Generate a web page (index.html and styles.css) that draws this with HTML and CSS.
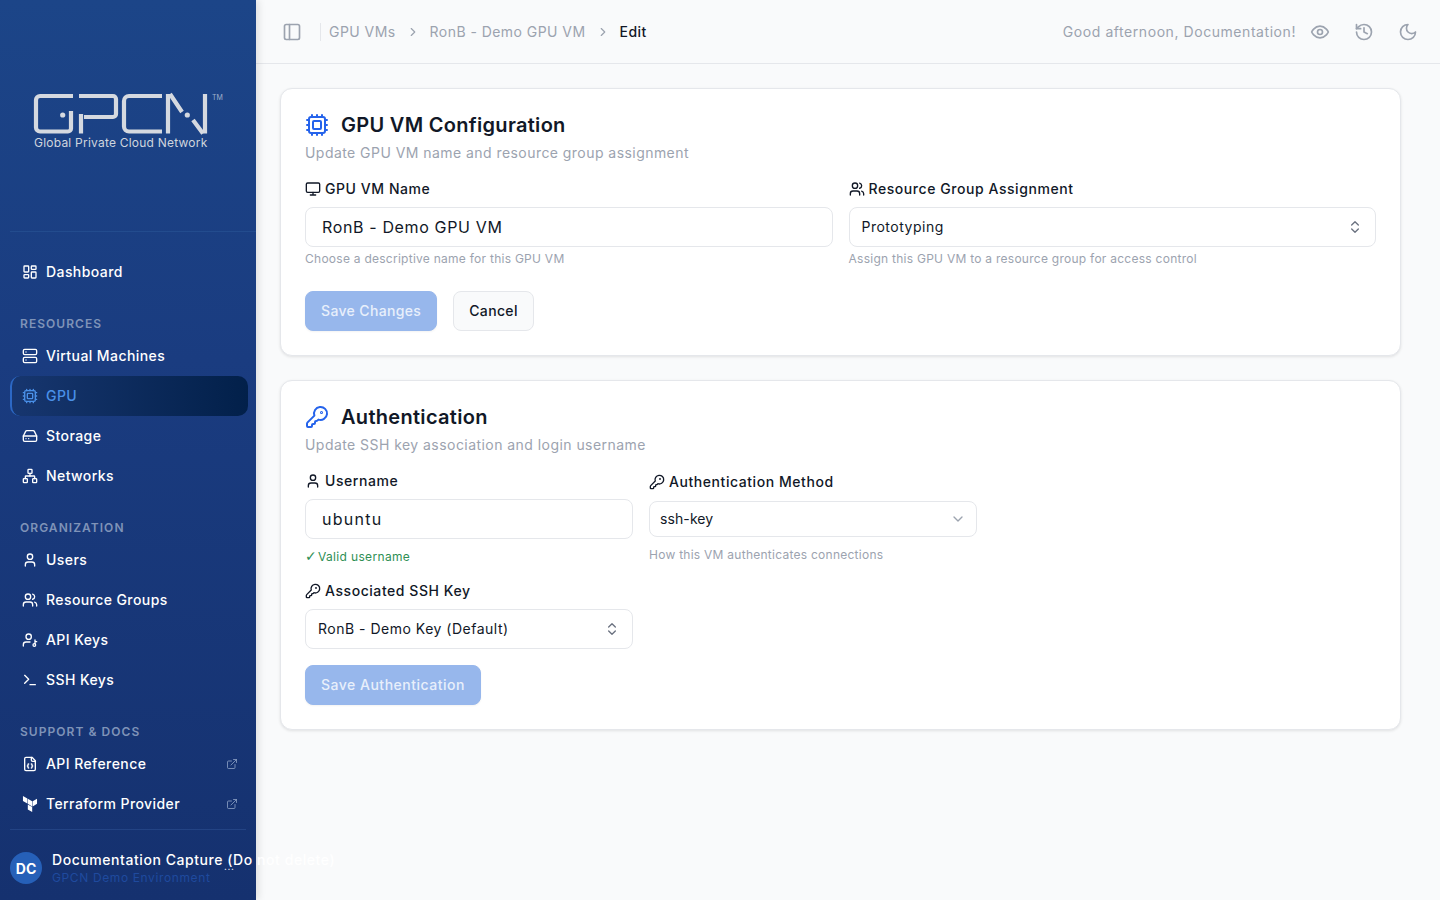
FILE: index.html
```html
<!DOCTYPE html>
<html lang="en">
<head>
    <meta charset="UTF-8">
    <meta name="viewport" content="width=device-width, initial-scale=1.0">
    <title>Edit GPU VM</title>
    <link rel="stylesheet" href="styles.css">
</head>
<body>
    <!-- icon sprite -->
    <svg class="sprite" xmlns="http://www.w3.org/2000/svg">
        <symbol id="i-dashboard" viewBox="0 0 24 24"><rect x="3" y="3" width="7" height="9" rx="1"/><rect x="14" y="3" width="7" height="5" rx="1"/><rect x="14" y="12" width="7" height="9" rx="1"/><rect x="3" y="16" width="7" height="5" rx="1"/></symbol>
        <symbol id="i-server" viewBox="0 0 24 24"><rect x="2" y="2" width="20" height="8" rx="2"/><rect x="2" y="14" width="20" height="8" rx="2"/><path d="M6 6h.01M6 18h.01"/></symbol>
        <symbol id="i-cpu" viewBox="0 0 24 24"><rect x="4" y="4" width="16" height="16" rx="2"/><rect x="8" y="8" width="8" height="8" rx="1"/><path d="M12 20v2M12 2v2M17 20v2M17 2v2M2 12h2M2 17h2M2 7h2M20 12h2M20 17h2M20 7h2M7 20v2M7 2v2"/></symbol>
        <symbol id="i-drive" viewBox="0 0 24 24"><path d="M22 12H2"/><path d="M5.45 5.11 2 12v6a2 2 0 0 0 2 2h16a2 2 0 0 0 2-2v-6l-3.45-6.89A2 2 0 0 0 16.76 4H7.24a2 2 0 0 0-1.79 1.11z"/><path d="M6 16h.01M10 16h.01"/></symbol>
        <symbol id="i-network" viewBox="0 0 24 24"><rect x="16" y="16" width="6" height="6" rx="1"/><rect x="2" y="16" width="6" height="6" rx="1"/><rect x="9" y="2" width="6" height="6" rx="1"/><path d="M5 16v-3a1 1 0 0 1 1-1h12a1 1 0 0 1 1 1v3"/><path d="M12 12V8"/></symbol>
        <symbol id="i-user" viewBox="0 0 24 24"><path d="M19 21v-2a4 4 0 0 0-4-4H9a4 4 0 0 0-4 4v2"/><circle cx="12" cy="7" r="4"/></symbol>
        <symbol id="i-users" viewBox="0 0 24 24"><path d="M16 21v-2a4 4 0 0 0-4-4H6a4 4 0 0 0-4 4v2"/><circle cx="9" cy="7" r="4"/><path d="M22 21v-2a4 4 0 0 0-3-3.87"/><path d="M16 3.13a4 4 0 0 1 0 7.75"/></symbol>
        <symbol id="i-userkey" viewBox="0 0 24 24"><circle cx="10" cy="7" r="4"/><path d="M2 21v-2a4 4 0 0 1 4-4h6"/><circle cx="18.5" cy="19.5" r="2"/><path d="M19.5 17.5V12M19.5 14.5H22"/></symbol>
        <symbol id="i-terminal" viewBox="0 0 24 24"><path d="m4 17 6-6-6-6"/><path d="M12 19h8"/></symbol>
        <symbol id="i-filecode" viewBox="0 0 24 24"><path d="M15 2H6a2 2 0 0 0-2 2v16a2 2 0 0 0 2 2h12a2 2 0 0 0 2-2V7Z"/><path d="M14 2v4a2 2 0 0 0 2 2h4"/><path d="M10 12a1 1 0 0 0-1 1v1a1 1 0 0 1-1 1 1 1 0 0 1 1 1v1a1 1 0 0 0 1 1"/><path d="M14 18a1 1 0 0 0 1-1v-1a1 1 0 0 1 1-1 1 1 0 0 1-1-1v-1a1 1 0 0 0-1-1"/></symbol>
        <symbol id="i-terraform" viewBox="0 0 24 24"><path class="solid" d="M1.44 0v7.575l6.561 3.79V3.787zm21.12 4.227-6.561 3.791v7.574l6.56-3.787zM8.72 4.23v7.575l6.561 3.787V8.018zm0 8.405v7.575L15.28 24v-7.578z"/></symbol>
        <symbol id="i-external" viewBox="0 0 24 24"><path d="M18 13v6a2 2 0 0 1-2 2H5a2 2 0 0 1-2-2V8a2 2 0 0 1 2-2h6"/><path d="M15 3h6v6"/><path d="M10 14 21 3"/></symbol>
        <symbol id="i-panel" viewBox="0 0 24 24"><rect x="3" y="3" width="18" height="18" rx="2"/><path d="M9 3v18"/></symbol>
        <symbol id="i-eye" viewBox="0 0 24 24"><path d="M2 12s3-7 10-7 10 7 10 7-3 7-10 7-10-7-10-7Z"/><circle cx="12" cy="12" r="3"/></symbol>
        <symbol id="i-history" viewBox="0 0 24 24"><path d="M3 12a9 9 0 1 0 9-9 9.75 9.75 0 0 0-6.74 2.74L3 8"/><path d="M3 3v5h5"/><path d="M12 7v5l4 2"/></symbol>
        <symbol id="i-moon" viewBox="0 0 24 24"><path d="M12 3a6 6 0 0 0 9 9 9 9 0 1 1-9-9Z"/></symbol>
        <symbol id="i-monitor" viewBox="0 0 24 24"><rect x="2" y="3" width="20" height="14" rx="2"/><path d="M8 21h8M12 17v4"/></symbol>
        <symbol id="i-key" viewBox="0 0 24 24"><path d="M2.586 17.414A2 2 0 0 0 2 18.828V21a1 1 0 0 0 1 1h3a1 1 0 0 0 1-1v-1a1 1 0 0 1 1-1h1a1 1 0 0 0 1-1v-1a1 1 0 0 1 1-1h.172a2 2 0 0 0 1.414-.586l.814-.814a6.5 6.5 0 1 0-4-4z"/><circle cx="16.5" cy="7.5" r=".5"/></symbol>
        <symbol id="i-updown" viewBox="0 0 24 24"><path d="m7 15 5 5 5-5"/><path d="m7 9 5-5 5 5"/></symbol>
        <symbol id="i-down" viewBox="0 0 24 24"><path d="m6 9 6 6 6-6"/></symbol>
        <symbol id="i-right" viewBox="0 0 24 24"><path d="m9 18 6-6-6-6"/></symbol>
    </svg>

    <aside class="sidebar">
        <div class="brand">
            <svg class="brand-mark" viewBox="0 0 190 40" xmlns="http://www.w3.org/2000/svg">
                <path d="M39 2H6a4 4 0 0 0-4 4v27.5a4 4 0 0 0 4 4h28a3 3 0 0 0 3-3V17"/>
                <path d="M45 2h34a3 3 0 0 1 3 3v15a3 3 0 0 1-3 3H50"/>
                <path d="M47 20v19.5"/>
                <path d="M128 2H95a5 5 0 0 0-5 5v25.5a5 5 0 0 0 5 5h33"/>
                <path d="M134 39.5V0M171 39.5V0"/>
                <path d="M136 0l12 18M159 26l10 13.5"/>
                <circle class="dot" cx="28.7" cy="21" r="2.6"/>
                <circle class="dot" cx="153.3" cy="21" r="2.6"/>
                <text class="tm" x="178" y="6">TM</text>
            </svg>
            <div class="brand-name">Global Private Cloud Network</div>
        </div>

        <nav class="nav">
            <a class="nav-item"><svg class="icon"><use href="#i-dashboard"/></svg>Dashboard</a>

            <div class="nav-title">RESOURCES</div>
            <a class="nav-item"><svg class="icon"><use href="#i-server"/></svg>Virtual Machines</a>
            <a class="nav-item active"><svg class="icon"><use href="#i-cpu"/></svg>GPU</a>
            <a class="nav-item"><svg class="icon"><use href="#i-drive"/></svg>Storage</a>
            <a class="nav-item"><svg class="icon"><use href="#i-network"/></svg>Networks</a>

            <div class="nav-title">ORGANIZATION</div>
            <a class="nav-item"><svg class="icon"><use href="#i-user"/></svg>Users</a>
            <a class="nav-item"><svg class="icon"><use href="#i-users"/></svg>Resource Groups</a>
            <a class="nav-item"><svg class="icon"><use href="#i-userkey"/></svg>API Keys</a>
            <a class="nav-item"><svg class="icon"><use href="#i-terminal"/></svg>SSH Keys</a>

            <div class="nav-title">SUPPORT &amp; DOCS</div>
            <a class="nav-item"><svg class="icon"><use href="#i-filecode"/></svg>API Reference<svg class="icon-ext"><use href="#i-external"/></svg></a>
            <a class="nav-item"><svg class="icon"><use href="#i-terraform"/></svg>Terraform Provider<svg class="icon-ext"><use href="#i-external"/></svg></a>
        </nav>

        <div class="account">
            <div class="avatar">DC</div>
            <div class="account-text">
                <div class="account-name">Documentation Capture (Do not delete)</div>
                <div class="account-org">GPCN Demo Environment</div>
            </div>
            <span class="account-more">...</span>
        </div>
    </aside>

    <div class="main">
        <header class="topbar">
            <svg class="icon-top panel-toggle"><use href="#i-panel"/></svg>
            <span class="divider"></span>
            <span class="crumb">GPU VMs</span>
            <svg class="crumb-sep"><use href="#i-right"/></svg>
            <span class="crumb">RonB - Demo GPU VM</span>
            <svg class="crumb-sep"><use href="#i-right"/></svg>
            <span class="crumb current">Edit</span>
            <span class="greeting">Good afternoon, Documentation!</span>
            <svg class="icon-top"><use href="#i-eye"/></svg>
            <svg class="icon-top"><use href="#i-history"/></svg>
            <svg class="icon-top"><use href="#i-moon"/></svg>
        </header>

        <main class="content">
            <section class="card">
                <div class="card-head"><svg class="icon-card"><use href="#i-cpu"/></svg><h2>GPU VM Configuration</h2></div>
                <p class="card-sub">Update GPU VM name and resource group assignment</p>
                <div class="form-grid">
                    <div class="field">
                        <label class="label"><svg class="icon-label"><use href="#i-monitor"/></svg>GPU VM Name</label>
                        <input class="input" type="text" value="RonB - Demo GPU VM">
                        <div class="hint tight">Choose a descriptive name for this GPU VM</div>
                    </div>
                    <div class="field">
                        <label class="label"><svg class="icon-label"><use href="#i-users"/></svg>Resource Group Assignment</label>
                        <div class="select"><span>Prototyping</span><svg class="icon-select"><use href="#i-updown"/></svg></div>
                        <div class="hint tight">Assign this GPU VM to a resource group for access control</div>
                    </div>
                </div>
                <div class="actions">
                    <button class="btn primary">Save Changes</button>
                    <button class="btn">Cancel</button>
                </div>
            </section>

            <section class="card">
                <div class="card-head"><svg class="icon-card"><use href="#i-key"/></svg><h2>Authentication</h2></div>
                <p class="card-sub">Update SSH key association and login username</p>
                <div class="form-grid narrow">
                    <div class="field">
                        <label class="label"><svg class="icon-label"><use href="#i-user"/></svg>Username</label>
                        <input class="input spaced" type="text" value="ubuntu">
                        <div class="hint valid"><span class="check">✓</span>Valid username</div>
                    </div>
                    <div class="field method">
                        <label class="label"><svg class="icon-label"><use href="#i-key"/></svg>Authentication Method</label>
                        <div class="select small"><span>ssh-key</span><svg class="icon-select"><use href="#i-down"/></svg></div>
                        <div class="hint">How this VM authenticates connections</div>
                    </div>
                    <div class="field">
                        <label class="label"><svg class="icon-label"><use href="#i-key"/></svg>Associated SSH Key</label>
                        <div class="select"><span>RonB - Demo Key (Default)</span><svg class="icon-select"><use href="#i-updown"/></svg></div>
                    </div>
                </div>
                <div class="actions near">
                    <button class="btn primary spaced">Save Authentication</button>
                </div>
            </section>
        </main>
    </div>
</body>
</html>
```

FILE: styles.css
```css
* {
    box-sizing: border-box;
}

html, body {
    height: 100%;
    margin: 0;
    overflow: hidden;
}

body {
    display: flex;
    font-family: "Inter", "Noto Sans", sans-serif;
    font-size: 14px;
    letter-spacing: .04em;
    color: #111827;
    background: #f9fafb;
}

.sprite {
    display: none;
}

svg {
    fill: none;
    stroke: currentColor;
    stroke-width: 2;
    stroke-linecap: round;
    stroke-linejoin: round;
    flex-shrink: 0;
}

.solid {
    fill: currentColor;
    stroke: none;
}

/* sidebar */
.sidebar {
    position: relative;
    z-index: 1;
    width: 256px;
    height: 900px;
    flex-shrink: 0;
    display: flex;
    flex-direction: column;
    color: #fff;
    background: linear-gradient(180deg, #1c4588 0%, #1a3c80 40%, #15316f 100%);
    box-shadow: 2px 0 8px rgba(0, 0, 0, .12);
}

.brand {
    height: 232px;
    margin-left: 10px;
    padding: 94px 0 0 24px;
    border-bottom: 1px solid #234c8e;
}

.brand-mark {
    display: block;
    width: 190px;
    height: 40px;
    color: #d5d9e0;
    stroke-width: 4.2;
    stroke-linecap: butt;
    overflow: visible;
}

.brand-mark .dot {
    fill: currentColor;
    stroke: none;
}

.brand-mark .tm {
    fill: #9fb0cc;
    stroke: none;
    font-size: 7px;
    letter-spacing: 0;
}

.brand-name {
    margin-top: 1px;
    font-size: 12px;
    line-height: 16px;
    letter-spacing: .22px;
    color: #cfd5de;
}

.nav {
    padding: 20px 8px 0 10px;
    height: 597px;
}

.nav-title {
    margin: 24px 0 4px 10px;
    font-size: 12px;
    line-height: 16px;
    font-weight: 600;
    letter-spacing: 1.05px;
    color: #7f93b8;
}

.nav-item {
    display: flex;
    align-items: center;
    gap: 8px;
    height: 40px;
    padding: 0 10px 2px 12px;
    font-weight: 500;
    letter-spacing: .42px;
    border-radius: 10px;
    color: #fff;
}

.nav-item.active {
    color: #4a90e8;
    background: linear-gradient(90deg, #17366f 0%, #02204a 100%);
    border-left: 2px solid #2c68c4;
    padding-left: 10px;
}

.icon {
    width: 16px;
    height: 16px;
    margin-top: 2px;
}

.icon-ext {
    width: 12px;
    height: 12px;
    margin: 2px 0 0 auto;
    stroke-width: 1.6;
    color: #8fa3c6;
}

.account {
    position: relative;
    display: flex;
    align-items: center;
    gap: 10px;
    margin: 0 10px;
    padding-top: 20px;
    border-top: 1px solid #234384;
}

.avatar {
    width: 32px;
    height: 32px;
    border-radius: 50%;
    display: flex;
    align-items: center;
    justify-content: center;
    flex-shrink: 0;
    font-weight: 700;
    letter-spacing: 0;
    background: #2660b8;
}

.account-text {
    white-space: nowrap;
}

.account-name {
    font-weight: 500;
    line-height: 20px;
}

.account-org {
    font-size: 12px;
    line-height: 16px;
    letter-spacing: .62px;
    color: #1f4a9e;
}

.account-more {
    position: absolute;
    left: 214px;
    top: 28px;
    font-size: 10px;
    line-height: 16px;
}

/* top bar */
.main {
    flex: 1;
    min-width: 0;
}

.topbar {
    height: 64px;
    display: flex;
    align-items: center;
    padding: 0 22px 0 26px;
    color: #9ca3af;
    border-bottom: 1px solid #e5e7eb;
}

.icon-top {
    width: 20px;
    height: 20px;
    margin-left: 24px;
}

.panel-toggle {
    margin-left: 0;
}

.divider {
    width: 1px;
    height: 18px;
    margin: 0 8px 0 18px;
    background: #e5e7eb;
}

.crumb {
    letter-spacing: .45px;
}

.crumb.current {
    color: #111827;
    font-weight: 500;
}

.crumb-sep {
    width: 14px;
    height: 14px;
    margin: 0 10px;
}

.greeting {
    margin-left: auto;
    margin-right: -10px;
}

/* cards */
.content {
    display: flex;
    flex-direction: column;
    gap: 24px;
    padding: 24px 39px 0 24px;
}

.card {
    padding: 24px;
    background: #fff;
    border: 1px solid #e5e7eb;
    border-radius: 12px;
    box-shadow: 0 1px 3px rgba(0, 0, 0, .1);
}

.card-head {
    display: flex;
    align-items: center;
    gap: 12px;
    height: 24px;
}

.card-head h2 {
    margin: 0;
    font-size: 20px;
    font-weight: 600;
    letter-spacing: .015em;
}

.icon-card {
    width: 24px;
    height: 24px;
    color: #2563eb;
}

.card-sub {
    margin: 6px 0 16px;
    line-height: 20px;
    letter-spacing: .032em;
    color: #9ca3af;
}

.form-grid {
    display: grid;
    grid-template-columns: 1fr 1fr;
    gap: 16px;
}

.form-grid.narrow {
    width: 672px;
}

.label {
    display: flex;
    align-items: center;
    gap: 4px;
    height: 20px;
    padding-bottom: 2px;
    margin-bottom: 8px;
    font-weight: 450;
}

.icon-label {
    width: 16px;
    height: 16px;
    margin-top: 2px;
}

.input, .select {
    display: flex;
    align-items: center;
    justify-content: space-between;
    width: 100%;
    height: 40px;
    border: 1px solid #e5e7eb;
    border-radius: 8px;
    background: #fff;
    color: #111827;
    font-family: inherit;
}

.input {
    padding: 0 16px;
    font-size: 16px;
    letter-spacing: .04em;
    outline: none;
}

.input.spaced {
    letter-spacing: 1.25px;
}

.select {
    padding: 0 12px 2px;
    letter-spacing: .5px;
}

.select.small {
    height: 36px;
    padding: 0 10px 2px;
    letter-spacing: .1px;
}

.icon-select {
    width: 16px;
    height: 16px;
    margin-top: 2px;
    color: #6b7280;
}

.select.small .icon-select {
    color: #9ca3af;
}

.method {
    padding-top: 1px;
}

.method .label {
    margin-bottom: 9px;
}

.hint {
    margin-top: 10px;
    font-size: 12px;
    line-height: 16px;
    letter-spacing: .26px;
    color: #9ca3af;
}

.hint.tight {
    margin-top: 4px;
}

.hint.valid {
    letter-spacing: .34px;
    color: #2f8f55;
}

.check {
    display: inline-block;
    width: 13px;
    font-family: "DejaVu Sans", sans-serif;
    font-size: 14px;
    line-height: 14px;
    letter-spacing: 0;
}

.actions {
    display: flex;
    gap: 16px;
    margin-top: 24px;
}

.actions.near {
    margin-top: 16px;
}

.btn {
    height: 40px;
    padding: 0 15px 2px;
    font-family: inherit;
    font-size: 14px;
    font-weight: 500;
    letter-spacing: .35px;
    color: #111827;
    background: #f9fafb;
    border: 1px solid #e5e7eb;
    border-radius: 8px;
}

.btn.spaced {
    letter-spacing: .5px;
}

.btn.primary {
    color: #e8effb;
    background: #97b7ec;
    border-color: #97b7ec;
    box-shadow: 0 1px 2px rgba(0, 0, 0, .05);
}
```
